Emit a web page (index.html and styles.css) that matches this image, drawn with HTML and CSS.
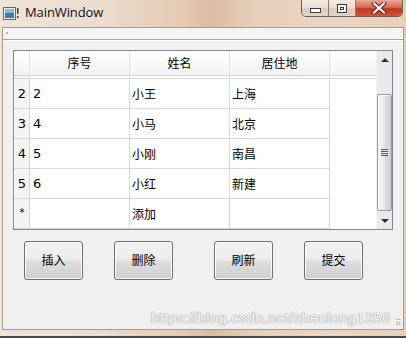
FILE: index.html
```html
<!DOCTYPE html>
<html>
<head>
<meta charset="utf-8">
<link rel="stylesheet" href="styles.css">
</head>
<body>
<div class="window">
  <div class="titlebar">
    <svg class="app-icon" width="16" height="14" viewBox="0 0 16 14">
      <rect x="0.5" y="0.5" width="12" height="12" fill="#e8eef4" stroke="#5a6a7a"/>
      <rect x="2" y="2" width="9" height="9" fill="#3f7aa8"/>
      <rect x="2" y="2" width="9" height="4" fill="#8fb9d8"/>
      <rect x="14" y="1" width="1.5" height="6" fill="#3a3a3a"/>
      <rect x="14" y="9" width="1.5" height="2" fill="#3a3a3a"/>
    </svg>
    <span class="title">MainWindow</span>
    <div class="caption">
      <div class="cap cap-min"><span class="min-glyph"></span></div>
      <div class="cap cap-max"><span class="max-glyph"></span></div>
      <div class="cap cap-close">
        <svg width="16" height="12" viewBox="0 0 16 12">
          <path d="M3 1.5 L13 10.5 M13 1.5 L3 10.5" stroke="#5b2118" stroke-width="4" stroke-linecap="square"/>
          <path d="M3 1.5 L13 10.5 M13 1.5 L3 10.5" stroke="#ffffff" stroke-width="2.2" stroke-linecap="square"/>
        </svg>
      </div>
    </div>
  </div>
  <div class="client">
    <div class="toolbar"><span class="handle"></span></div>
    <div class="table">
      <div class="grid">
        <div class="hcorner"></div>
        <div class="hcell">序号</div>
        <div class="hcell">姓名</div>
        <div class="hcell">居住地</div>
        <div class="hcell hlast"></div>

        <div class="vh part"></div>
        <div class="cell part"></div>
        <div class="cell part"></div>
        <div class="cell part"></div>
        <div class="blank part"></div>

        <div class="vh">2</div>
        <div class="cell num">2</div>
        <div class="cell">小王</div>
        <div class="cell">上海</div>
        <div class="blank"></div>

        <div class="vh">3</div>
        <div class="cell num">4</div>
        <div class="cell">小马</div>
        <div class="cell">北京</div>
        <div class="blank"></div>

        <div class="vh">4</div>
        <div class="cell num">5</div>
        <div class="cell">小刚</div>
        <div class="cell">南昌</div>
        <div class="blank"></div>

        <div class="vh">5</div>
        <div class="cell num">6</div>
        <div class="cell">小红</div>
        <div class="cell">新建</div>
        <div class="blank"></div>

        <div class="vh star">*</div>
        <div class="cell num"></div>
        <div class="cell">添加</div>
        <div class="cell"></div>
        <div class="blank"></div>
      </div>
      <div class="vscroll">
        <div class="arrow"><span class="tri-up"></span></div>
        <div class="track">
          <div class="thumb"><span class="grip"></span></div>
        </div>
        <div class="arrow"><span class="tri-down"></span></div>
      </div>
    </div>
    <div class="buttons">
      <button class="btn">插入</button>
      <button class="btn">删除</button>
      <button class="btn b3">刷新</button>
      <button class="btn">提交</button>
    </div>
    <div class="watermark">https://blog.csdn.net/shenlong1356</div>
    <span class="sizegrip">⠿</span>
  </div>
  <div class="frame-bottom"></div>
</div>
</body>
</html>
```

FILE: styles.css
```css
* { box-sizing: border-box; }
html, body { margin: 0; padding: 0; }
body {
  width: 406px;
  height: 338px;
  overflow: hidden;
  font-family: "Liberation Sans", "Noto Sans CJK SC", sans-serif;
  font-size: 12px;
  color: #000;
}
.window {
  width: 406px;
  height: 338px;
  display: flex;
  flex-direction: column;
  background: linear-gradient(90deg, #efe4da 0%, #ecdccd 25%, #e4cbb4 45%, #d9bb9f 52%, #e6cfba 62%, #ead6c3 80%, #e6d0bb 100%);
}
.titlebar {
  height: 27px;
  display: flex;
  align-items: flex-start;
  flex-shrink: 0;
}
.app-icon { margin: 7px 0 0 3px; }
.title {
  margin: 3px 0 0 6px;
  font-family: "Open Sans", "Noto Sans", sans-serif;
  font-size: 13px;
  line-height: 18px;
  color: #101010;
  letter-spacing: -0.1px;
}
.caption {
  margin-left: auto;
  margin-right: 3px;
  display: flex;
  height: 17px;
  border: 1px solid #6f5e52;
  border-top: none;
  border-radius: 0 0 5px 5px;
  overflow: hidden;
}
.cap {
  height: 16px;
  display: flex;
  align-items: center;
  justify-content: center;
}
.cap-min, .cap-max {
  width: 27px;
  background: linear-gradient(180deg, #f5ece4 0%, #eadbcf 50%, #dccab9 55%, #e3d3c4 100%);
  border-right: 1px solid #8a7a6e;
}
.cap-close {
  width: 46px;
  background: linear-gradient(180deg, #e9a999 0%, #d86a55 45%, #c2371d 55%, #d0543b 100%);
}
.min-glyph {
  width: 11px;
  height: 5px;
  margin-top: 4px;
  border: 1px solid #3a3a3a;
  background: #fff;
  box-shadow: 0 0 1px #fff;
}
.max-glyph {
  width: 10px;
  height: 9px;
  border: 1px solid #3a3a3a;
  box-shadow: inset 0 0 0 2px #fff, inset 0 0 0 3px #3a3a3a;
  background: #fff;
}
.client {
  position: relative;
  margin: 0 2px;
  height: 303px;
  background: #f0f0f0;
  border: 1px solid #a8988a;
  display: flex;
  flex-direction: column;
  flex-shrink: 0;
}
.toolbar {
  height: 12px;
  background: #f4f4f4;
  border-bottom: 1px solid #a0a0a0;
  box-shadow: 0 1px 0 #ffffff;
  padding: 4px 0 0 3px;
}
.handle {
  display: block;
  width: 2px;
  height: 2px;
  background: #b8b8b8;
}
.table {
  margin: 10px 0 0 10px;
  width: 380px;
  height: 180px;
  border: 1px solid #828790;
  display: flex;
  background: #fff;
}
.grid {
  width: 362px;
  display: grid;
  grid-template-columns: 16px 100px 100px 100px 46px;
  grid-template-rows: 25px 3px repeat(5, 30px);
  overflow: hidden;
}
.hcorner, .hcell {
  background: linear-gradient(180deg, #ffffff 0%, #f7f8fa 50%, #f1f2f4 100%);
  border-right: 1px solid #e3e4e6;
  border-bottom: 1px solid #d5d5d5;
}
.hcell {
  display: flex;
  align-items: center;
  justify-content: center;
  font-family: "Noto Sans CJK SC", sans-serif;
  font-size: 12px;
  padding-bottom: 1px;
}
.hlast { border-right: none; }
.vh {
  background: #f4f4f4;
  border-right: 1px solid #d8d8d8;
  border-bottom: 1px solid #d8d8d8;
  display: flex;
  align-items: center;
  justify-content: center;
  font-size: 13px;
  font-family: "DejaVu Sans", sans-serif;
  padding-left: 1px;
  box-shadow: inset 1px 0 0 #ffffff;
}
.vh.star { font-size: 10px; padding-bottom: 3px; }
.cell {
  border-right: 1px solid #d8d8d8;
  border-bottom: 1px solid #d8d8d8;
  display: flex;
  align-items: center;
  padding-left: 2px;
  font-family: "Noto Sans CJK SC", sans-serif;
  font-size: 12px;
}
.cell.num {
  font-family: "DejaVu Sans", sans-serif;
  font-size: 13px;
  padding-left: 3px;
}
.blank { background: #fff; }
.part { border-bottom: 1px solid #d8d8d8; }
.vscroll {
  width: 16px;
  background: #eaeaea;
  border-left: 1px solid #f2f2f2;
  display: flex;
  flex-direction: column;
}
.arrow {
  height: 17px;
  display: flex;
  align-items: center;
  justify-content: center;
}
.tri-up {
  width: 0; height: 0;
  border-left: 4px solid transparent;
  border-right: 4px solid transparent;
  border-bottom: 4px solid #303030;
}
.tri-down {
  width: 0; height: 0;
  border-left: 4px solid transparent;
  border-right: 4px solid transparent;
  border-top: 4px solid #303030;
}
.track {
  flex: 1;
  padding-top: 26px;
}
.thumb {
  height: 117px;
  border: 1px solid #979797;
  border-radius: 2px;
  background: linear-gradient(90deg, #f4f4f4 0%, #ececec 40%, #dcdcdc 60%, #cfcfcf 100%);
  box-shadow: inset 1px 1px 0 #ffffff;
  display: flex;
  align-items: center;
  justify-content: center;
}
.grip {
  width: 7px;
  height: 7px;
  background: repeating-linear-gradient(180deg, #555 0px, #555 1px, #f4f4f4 1px, #f4f4f4 2px);
}
.buttons {
  display: flex;
  margin: 11px 0 0 21px;
}
.btn {
  width: 59px;
  height: 39px;
  margin-right: 31px;
  border: 1px solid #707070;
  border-radius: 3px;
  background: linear-gradient(180deg, #f2f2f2 0%, #ebebeb 48%, #dddddd 52%, #cfcfcf 100%);
  box-shadow: inset 0 0 0 1px #fcfcfc;
  font-family: "Noto Sans CJK SC", sans-serif;
  font-size: 12px;
  color: #000;
  padding: 0 0 2px 0;
}
.btn.b3 { margin-left: 10px; }
.watermark {
  position: absolute;
  left: 148px;
  top: 281px;
  font-family: "Liberation Sans", sans-serif;
  font-size: 15px;
  color: #f8f8f8;
  text-shadow: 0 0 1px #9a9a9a, 0 0 1px #a8a8a8, 0 0 2px #c8c8c8;
  letter-spacing: 0.2px;
  white-space: nowrap;
}
.sizegrip {
  position: absolute;
  right: 1px;
  bottom: 1px;
  font-size: 9px;
  color: #a0a0a0;
  line-height: 10px;
}
.frame-bottom {
  flex: 1;
  border-bottom: 2px solid #4a4a4a;
}
```
